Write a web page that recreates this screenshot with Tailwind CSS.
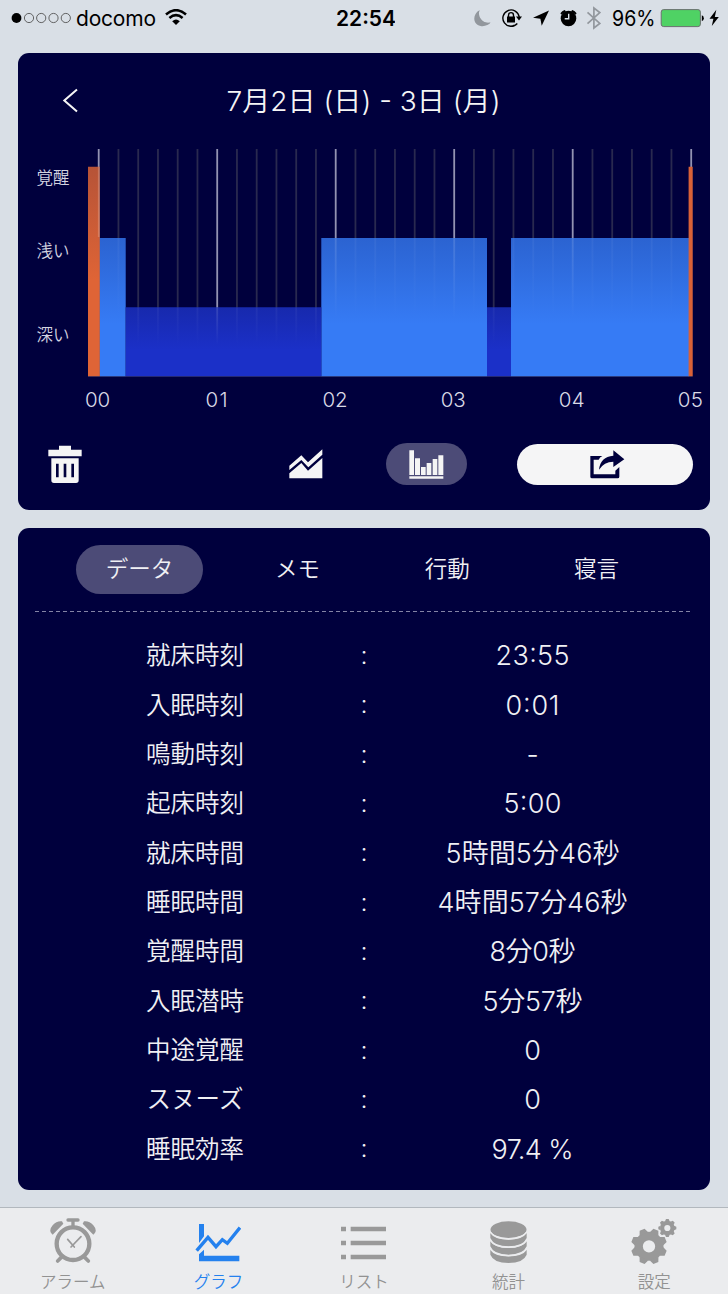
<!DOCTYPE html>
<html lang="ja">

<head>
    <meta charset="UTF-8">
    <title>Sleep Graph</title>
    <script src="https://cdn.jsdelivr.net/npm/@tailwindcss/browser@4"></script>
</head>

<body class="bg-[#d9dfe6] w-[728px] h-[1294px] overflow-hidden flex flex-col font-['Inter','Noto_Sans_CJK_JP',sans-serif]">

    <!-- status bar -->
    <header class="h-[53px] shrink-0 grid grid-cols-[1fr_auto_1fr] items-start text-black">
        <div class="h-[37px] flex items-center pl-[11px]">
            <svg class="w-[61px] h-3 -mt-0.5" viewBox="0 0 61 12" fill="none" stroke="#555" stroke-width=".9">
                <circle cx="5.5" cy="6" r="4.9" fill="#000" stroke="none" />
                <circle cx="18" cy="6" r="4.6" />
                <circle cx="30.2" cy="6" r="4.6" />
                <circle cx="42.5" cy="6" r="4.6" />
                <circle cx="54.8" cy="6" r="4.6" />
            </svg>
            <svg class="w-[84px] h-[37px] ml-1" viewBox="0 0 84 37">
                <text x="0" y="25.7" font-size="21" textLength="80">docomo</text>
            </svg>
            <svg class="w-[22px] h-4 ml-[5px] -mt-1" viewBox="0 0 22 16" fill="none" stroke="#000" stroke-width="2.6">
                <path d="M1 5.4Q11-3 21 5.4M4.4 9Q11 3.4 17.6 9" />
                <path d="M7.2 12.2Q11 8.6 14.8 12.2L11 16Z" fill="#000" stroke="none" />
            </svg>
        </div>
        <svg class="w-[62px] h-[37px]" viewBox="0 0 62 37">
            <text x="3" y="25.7" font-size="21" font-weight="600" textLength="60" lengthAdjust="spacingAndGlyphs">22:54</text>
        </svg>
        <div class="h-[37px] flex items-center justify-end pr-2">
            <svg class="w-[246px] h-[37px]" viewBox="474 0 246 37">
                <path d="M479.5 10.2a8.3 8.3 0 1 0 11 12.4a9.5 9.5 0 0 1-11-12.4z" fill="#92979d" />
                <path d="M479.5 10.2C472 14 472.500 25.500 481.500 26.200C485.500 26.500 489 24.800 490.500 22.600C482.500 24.500 476.800 17.500 479.500 10.200z" fill="#92979d" />
                <g fill="none" stroke="#000" stroke-width="1.4">
                    <path d="M517.3 23.5A8.2 8.2 0 1 1 519.2 17M514.5 25.2A8 8 0 0 1 508 25.6" />
                    <path d="M508.5 17v-1.8a2.5 2.6 0 0 1 5 0V17" />
                </g>
                <path d="M507 16.6h8v6h-8zM516 16.6h6l-3 3.8z" />
                <path d="M549 10.4l-7.3 15.4-1.3-7.1-7.4-.9z" />
                <path d="M560.4 13.2a9 9 0 0 1 4.2-3.3l1.4 1.3-4.6 3.5zM576.6 13.2a9 9 0 0 0-4.2-3.3l-1.4 1.3 4.6 3.5z" />
                <circle cx="568.5" cy="18.5" r="7.8" />
                <path d="M568.7 13.8v5h-4" stroke="#d9dfe6" stroke-width="1.4" fill="none" />
                <path d="M587.5 12.4l12.3 11-5.900 4.600V8l5.900 4.600-12.300 11" fill="none" stroke="#92979d" stroke-width="1.7" />
                <text x="612" y="25.7" font-size="21" textLength="43.5" lengthAdjust="spacingAndGlyphs">96%</text>
                <rect x="661.2" y="9.6" width="39.2" height="17" rx="2.5" fill="#4fd264" stroke="#6b706f" stroke-width="1" />
                <path d="M701.8 15.2q2 .4 2 3t-2 3z" />
                <path d="M716.3 9.8l-6.800 9h3.900l-1.600 7.300 7-9.200h-4z" />
            </svg>
        </div>
    </header>

    <!-- graph card -->
    <section class="mx-[18px] h-[457px] shrink-0 rounded-[11px] bg-[#00003d] flex flex-col">
        <div class="h-[96px] flex">
            <svg class="w-full h-full" viewBox="18 53 692 96">
                <path d="M77 89.5L64.3 100.5 77 111.5" fill="none" stroke="#f5f5f5" stroke-width="2" />
                <text x="226.5" y="110.6" font-size="27.5" font-weight="350" fill="#f5f5f5" textLength="274" lengthAdjust="spacingAndGlyphs">7月2日 (日) - 3日 (月)</text>
            </svg>
        </div>

        <svg class="w-[692px] h-[270px]" viewBox="18 149 692 270">
            <defs>
                <linearGradient id="awake" gradientUnits="userSpaceOnUse" x1="0" y1="167" x2="0" y2="280">
                    <stop stop-color="#b65337" />
                    <stop offset="1" stop-color="#df6436" />
                </linearGradient>
                <linearGradient id="light" gradientUnits="userSpaceOnUse" x1="0" y1="238" x2="0" y2="324">
                    <stop stop-color="#2b63d1" />
                    <stop offset="1" stop-color="#367bf5" />
                </linearGradient>
                <linearGradient id="deep" gradientUnits="userSpaceOnUse" x1="0" y1="307" x2="0" y2="350">
                    <stop stop-color="#1729ad" />
                    <stop offset="1" stop-color="#1b30c8" />
                </linearGradient>
                <linearGradient id="fadeLight" gradientUnits="userSpaceOnUse" x1="0" y1="238" x2="0" y2="318">
                    <stop stop-color="#fff" stop-opacity=".14" />
                    <stop offset="1" stop-color="#fff" stop-opacity="0" />
                </linearGradient>
                <linearGradient id="fadeDeep" gradientUnits="userSpaceOnUse" x1="0" y1="307" x2="0" y2="345">
                    <stop stop-color="#fff" stop-opacity=".14" />
                    <stop offset="1" stop-color="#fff" stop-opacity="0" />
                </linearGradient>
            </defs>
            <g id="grid"></g>
            <path fill="url(#light)" d="M99.7 238h26v138.3h-26zM321.3 238H487v138.3H321.3zM511 238h178v138.3H511z" />
            <path fill="url(#deep)" d="M125.7 307.3h195.6v69H125.7zM487 307.3h24v69h-24z" />
            <g id="fade"></g>
            <path fill="url(#awake)" d="M88 166.7h11.7v209.6H88z" />
            <path fill="#d96137" d="M688.6 166.7h4.1v209.6h-4.1z" />
            <path d="M98.7 167v70" stroke="#fff" stroke-opacity=".2" stroke-width="1.6" />
            <path d="M88 376.5h604.7" stroke="#fff" stroke-opacity=".12" />
            <g fill="#d4d4e0" font-size="16.5" font-weight="350">
                <text x="36.5" y="183.5">覚醒</text>
                <text x="36.5" y="256.5">浅い</text>
                <text x="36.5" y="340.5">深い</text>
            </g>
            <g fill="#dadae6" font-size="20.5" font-weight="350" text-anchor="middle">
                <text x="97.6" y="407.2" textLength="25">00</text>
                <text x="216.5" y="407.2" textLength="22">01</text>
                <text x="335" y="407.2" textLength="25">02</text>
                <text x="453.3" y="407.2" textLength="25">03</text>
                <text x="571.7" y="407.2" textLength="26">04</text>
                <text x="690.3" y="407.2" textLength="25">05</text>
            </g>
        </svg>

        <div class="flex items-center h-[90px] pl-[30px] pr-[17px]">
            <!-- trash -->
            <svg class="w-[34px] h-[38px]" viewBox="0 0 102 114" fill="#f5f5f5">
                <path d="M1 14h32V2h36v12h32v20H1z" />
                <path fill-rule="evenodd" d="M10 40h82v66q0 8-8 8H18q-8 0-8-8zM24 56v41h8V56zM47 56v41h8V56zM70 56v41h8V56z" />
            </svg>
            <!-- line graph -->
            <svg class="w-[34px] h-[30px] ml-[207px]" viewBox="0 0 102 90" fill="#f5f5f5">
                <path d="M1 50L37 19 57 40 100 1V17L58 55 37 33 1 63z" />
                <path d="M1 73L37 42 57 65 100 27V88H1z" />
            </svg>
            <!-- bar graph, selected -->
            <div class="w-[81px] h-[42px] ml-[63px] rounded-full bg-[#4c4b77] flex items-center justify-center">
                <svg class="w-[35px] h-[30px]" viewBox="0 0 105 90" fill="#f5f5f5">
                    <path d="M1 4h14v74H1zM18 28h15v50H18zM36 54h14v24H36zM53 42h14v36H53zM71 30h14v48H71zM88 19h15v59H88zM1 82h102v7H1z" />
                </svg>
            </div>
            <!-- share -->
            <div class="w-[176px] h-[41px] ml-[50px] rounded-full bg-[#f5f5f6] flex items-center justify-center">
                <svg class="w-[35px] h-[29px] ml-1" viewBox="0 0 105 87" fill="#00003d">
                    <path d="M1 18H37Q29 22 26 29H11V73H76V62L88 51V80Q88 85 83 85H6Q1 85 1 80z" />
                    <path d="M27 59Q31 20 70 17V1L103 28 70 51V35Q42 35 27 59z" />
                </svg>
            </div>
        </div>
    </section>

    <!-- data card -->
    <section class="mx-[18px] mt-[18px] h-[662px] shrink-0 rounded-[11px] bg-[#00003d] text-[#f0f0f4] font-[350]">
        <nav class="flex h-[82px] pt-[17px] pl-[47px] text-[22.5px]">
            <div class="w-[149.3px]"><div class="ml-[11px] w-[127px] h-[49px] rounded-full bg-[#4c4b77] flex items-center justify-center pb-0.5">データ</div></div>
            <div class="w-[149.3px] h-[49px] flex items-center justify-center pb-0.5 pl-[17px]">メモ</div>
            <div class="w-[149.3px] h-[49px] flex items-center justify-center pb-0.5 pl-[18px]">行動</div>
            <div class="w-[149.3px] h-[49px] flex items-center justify-center pb-0.5 pl-[18px]">寝言</div>
        </nav>
        <svg class="ml-[17px] w-[658px] h-0.5" viewBox="0 0 658 2">
            <path d="M0 1.500H658" stroke="#8383a5" stroke-width="1" stroke-dasharray="4 3" />
        </svg>
        <div id="rows" class="pt-[19px]"></div>
    </section>

    <!-- tab bar -->
    <nav class="mt-[17px] h-[87px] shrink-0 border-t border-[#b2b8be] bg-[#ebecee] grid grid-cols-5 text-[16.5px] leading-[20px] font-[350] text-[#929292]">
        <div class="flex flex-col items-center pt-2.5">
            <svg class="w-[46px] h-[46px]" viewBox="0 0 138 138" fill="none" stroke="#999">
                <circle cx="69" cy="77" r="49" stroke-width="13" />
                <path d="M69 26V7M54 6H84" stroke-width="10" stroke-linecap="round" />
                <path d="M33 119L23 129M105 119l10 10" stroke-width="11" stroke-linecap="round" />
                <path d="M53 64l20 23M93 56L63 87" stroke-width="5" stroke-linecap="round" />
                <path d="M4 46Q-4 36 8 22T36 10L40 17 8 50zM134 46Q142 36 130 22T102 10L98 17 130 50z" fill="#999" stroke="none" />
            </svg>
            <span class="mt-[8px]">アラーム</span>
        </div>
        <div class="flex flex-col items-center pt-[15px] text-[#2481ee]">
            <svg class="w-[46px] h-[40px]" viewBox="0 0 138 120" fill="#2481ee">
                <path d="M12 3H27V40L12 60zM27 80V98H133V115H12V94z" />
                <path d="M5 83L39 43 63 71 82 50 97 61 135 14" fill="none" stroke="#2481ee" stroke-width="10" />
            </svg>
            <span class="mt-[9px]">グラフ</span>
        </div>
        <div class="flex flex-col items-center pt-[18px]">
            <svg class="w-[45px] h-[34px]" viewBox="0 0 135 102" fill="#999">
                <path d="M0 2h15v14H0zM29 2h106v14H29zM0 44h15v14H0zM29 44h106v14H29zM0 86h15v14H0zM29 86h106v14H29z" />
            </svg>
            <span class="mt-[12px]">リスト</span>
        </div>
        <div class="flex flex-col items-center pt-[13px] pr-0.5">
            <svg class="w-[37px] h-[42px]" viewBox="0 0 111 126" fill="#999">
                <ellipse cx="55.5" cy="26" rx="54" ry="25" />
                <path id="disk" d="M1 34Q13 56 55.5 56T110 34V51Q100 76 55.5 76T1 51z" />
                <use href="#disk" y="25" />
                <use href="#disk" y="50" />
                <path d="M0 32Q13 54 55.500 54T111 32M0 57Q13 79 55.500 79T111 57M0 82Q13 104 55.500 104T111 82" fill="none" stroke="#ebecee" stroke-width="4.500" />
            </svg>
            <span class="mt-[9px]">統計</span>
        </div>
        <div class="flex flex-col items-center pt-[11px] pr-0.5">
            <svg class="w-[46px] h-[46px]" viewBox="0 0 138 138" fill="#999">
                <g transform="translate(54 82)">
                    <circle r="31" fill="none" stroke="#999" stroke-width="25" />
                    <g transform="rotate(22.5)">
                        <path id="teeth" d="M-14-40L-8-54H8L14-40zM-14 40L-8 54H8L14 40z" />
                        <use href="#teeth" transform="rotate(45)" />
                        <use href="#teeth" transform="rotate(90)" />
                        <use href="#teeth" transform="rotate(135)" />
                    </g>
                </g>
                <g transform="translate(109 27) scale(.5)">
                    <circle r="31" fill="none" stroke="#999" stroke-width="25" />
                    <use href="#teeth" />
                    <use href="#teeth" transform="rotate(45)" />
                    <use href="#teeth" transform="rotate(90)" />
                    <use href="#teeth" transform="rotate(135)" />
                </g>
            </svg>
            <span class="mt-[7px]">設定</span>
        </div>
    </nav>

</body>

<script>
    const rows = [
        ['就床時刻', '23:55', 74],
        ['入眠時刻', '0:01', 54],
        ['鳴動時刻', '-', 0],
        ['起床時刻', '5:00', 58],
        ['就床時間', '5時間5分46秒', 174],
        ['睡眠時間', '4時間57分46秒', 190],
        ['覚醒時間', '8分0秒', 86],
        ['入眠潜時', '5分57秒', 100],
        ['中途覚醒', '0', 0],
        ['スヌーズ', '0', 0],
        ['睡眠効率', '97.4 %', 82],
    ];
    document.getElementById('rows').innerHTML = rows.map(([label, value, len]) => `
        <div class="h-[49.35px] flex items-center">
            <div class="w-[330px] pl-[24px] text-center text-[24.5px]">${label}</div>
            <div class="w-[32px] text-center text-[25px]">:</div>
            <svg class="w-[330px] h-[49px]" viewBox="0 0 330 49" fill="#f0f0f4">
                <text x="152.500" y="34" font-size="27" text-anchor="middle" ${len ? `textLength="${len}"` : ''}>${value}</text>
            </svg>
        </div>`).join('');

    // grid line every 10 minutes, brighter on the hour
    let grid = '', fade = '';
    for (let i = 0; i <= 30; i++) {
        const x = 98.7 + i * 19.75 - 0.9;
        const hour = i % 6 == 0;
        grid += `<rect x="${x}" y="149" width="1.8" height="227" fill="${hour ? '#9393b2' : '#29294f'}"/>`;
        const deep = (i > 1 && i < 12) || i == 20;
        fade += `<rect x="${x}" y="${deep ? 307.5 : 238}" width="1.8" height="${deep ? 69 : 138}" fill="url(#${deep ? 'fadeDeep' : 'fadeLight'})" opacity="${hour ? 1 : 0.35}"/>`;
    }
    document.getElementById('grid').innerHTML = grid;
    document.getElementById('fade').innerHTML = fade;
</script>

</html>
